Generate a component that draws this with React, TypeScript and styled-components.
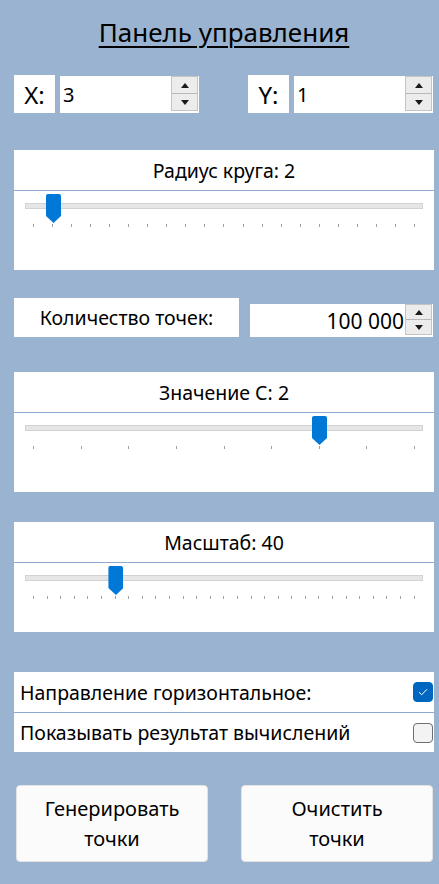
import { useState } from "react";
import styled, { createGlobalStyle } from "styled-components";

// ── Global ────────────────────────────────────────────────────────────────────

const GlobalStyle = createGlobalStyle`
  html, body {
    margin: 0;
    padding: 0;
    background: #9ab3d0;
  }
  body {
    font-family: "Noto Sans", "Open Sans", sans-serif;
    color: #000;
  }
`;

// ── Layout ────────────────────────────────────────────────────────────────────

const Page = styled.div`
  width: 420px;
  min-height: 884px;
  padding: 0 5px 0 14px;
  display: flex;
  flex-direction: column;
`;

const Title = styled.h1`
  margin: 14px 0 0;
  height: 36px;
  font-size: 26px;
  font-weight: 400;
  line-height: 36px;
  text-align: center;
  text-decoration: underline;
  text-underline-offset: 4px;
  text-decoration-thickness: 2px;
`;

const CoordRow = styled.div`
  margin-top: 25px;
  display: flex;
  justify-content: space-between;
  padding-right: 1px;
`;

const CoordGroup = styled.div`
  display: flex;
  gap: 5px;
  align-items: flex-end;
`;

const AxisLabel = styled.div`
  width: 41px;
  height: 38px;
  background: #fff;
  display: flex;
  align-items: center;
  justify-content: center;
  font-size: 24px;
`;

const CountRow = styled.div`
  margin-top: 28px;
  display: flex;
  align-items: flex-end;
  justify-content: space-between;
  padding-right: 1px;
`;

const CountLabel = styled.div`
  width: 225px;
  height: 39px;
  background: #fff;
  display: flex;
  align-items: center;
  justify-content: center;
  font-size: 19.5px;
`;

// ── Number input with spinner ─────────────────────────────────────────────────

const NumberBox = styled.div<{ $w: number; $h: number }>`
  width: ${({ $w }) => $w}px;
  height: ${({ $h }) => $h}px;
  background: #fff;
  display: flex;
  align-items: center;
  box-sizing: border-box;
  padding: 0 1px 0 3px;
`;

const NumberValue = styled.span<{ $align: "left" | "right"; $size: number }>`
  flex: 1;
  text-align: ${({ $align }) => $align};
  font-size: ${({ $size }) => $size}px;
  padding-right: 1px;
`;

const Spinner = styled.div`
  width: 27px;
  align-self: stretch;
  margin: 0 0 2px;
  display: flex;
  flex-direction: column;
  border: 1px solid #c4c4c4;
  background: #ececec;
  box-sizing: border-box;
`;

const SpinButton = styled.div<{ $down?: boolean }>`
  flex: 1;
  display: flex;
  align-items: center;
  justify-content: center;
  border-top: ${({ $down }) => ($down ? "1px solid #b8b8b8" : "none")};

  &::after {
    content: "";
    width: 0;
    height: 0;
    border-left: 4px solid transparent;
    border-right: 4px solid transparent;
    ${({ $down }) =>
      $down ? "border-top: 5px solid #1a1a1a;" : "border-bottom: 5px solid #1a1a1a;"}
  }
`;

function NumberField({
  value,
  width,
  height,
  align,
  size,
}: {
  value: string;
  width: number;
  height: number;
  align: "left" | "right";
  size: number;
}) {
  return (
    <NumberBox $w={width} $h={height}>
      <NumberValue $align={align} $size={size}>
        {value}
      </NumberValue>
      <Spinner>
        <SpinButton />
        <SpinButton $down />
      </Spinner>
    </NumberBox>
  );
}

// ── Slider card ───────────────────────────────────────────────────────────────

const Card = styled.div<{ $mt: number; $h: number }>`
  margin-top: ${({ $mt }) => $mt}px;
  height: ${({ $h }) => $h}px;
  background: #fff;
  display: flex;
  flex-direction: column;
`;

const CardHeader = styled.div`
  height: 40px;
  display: flex;
  align-items: center;
  justify-content: center;
  font-size: 19.5px;
  border-bottom: 1px solid #8eabcf;
`;

const SliderArea = styled.div`
  padding: 12px 11px 0;
`;

const Track = styled.div`
  position: relative;
  height: 6px;
  background: #e6e6e6;
  border: 1px solid #d2d2d2;
  box-sizing: border-box;
`;

const Thumb = styled.div`
  position: absolute;
  top: -10px;
  width: 15px;
  height: 29px;
  margin-left: -7px;
  background: #0078d7;
  border-radius: 2px 2px 0 0;
  clip-path: polygon(0 0, 100% 0, 100% 76%, 50% 100%, 0 76%);
`;

const Ticks = styled.div`
  margin: 15px 8px 0;
  height: 3px;
  display: flex;
  justify-content: space-between;
`;

const Tick = styled.span`
  width: 1px;
  height: 3px;
  background: #a0a0a0;
`;

function SliderCard({
  label,
  value,
  min,
  max,
  step,
  mt,
  h,
}: {
  label: string;
  value: number;
  min: number;
  max: number;
  step: number;
  mt: number;
  h: number;
}) {
  const frac = (value - min) / (max - min);
  const count = Math.round((max - min) / step) + 1;
  return (
    <Card $mt={mt} $h={h}>
      <CardHeader>
        {label}: {value}
      </CardHeader>
      <SliderArea>
        <Track>
          <Thumb style={{ left: `calc(8px + ${frac} * (100% - 16px))` }} />
        </Track>
        <Ticks>
          {Array.from({ length: count }, (_, i) => (
            <Tick key={i} />
          ))}
        </Ticks>
      </SliderArea>
    </Card>
  );
}

// ── Checkbox card ─────────────────────────────────────────────────────────────

const OptionsCard = styled.div`
  margin-top: 40px;
  background: #fff;
  display: flex;
  flex-direction: column;
`;

const OptionRow = styled.label`
  height: 40px;
  display: flex;
  align-items: center;
  justify-content: space-between;
  padding: 0 1px 0 6px;
  font-size: 19.5px;
  cursor: pointer;

  & + & {
    border-top: 1px solid #8eabcf;
    height: 39px;
  }
`;

const Box = styled.span<{ $checked: boolean }>`
  width: 20px;
  height: 20px;
  box-sizing: border-box;
  border-radius: 4px;
  display: flex;
  align-items: center;
  justify-content: center;
  background: ${({ $checked }) => ($checked ? "#0067c0" : "#f3f3f3")};
  border: 1px solid ${({ $checked }) => ($checked ? "#0067c0" : "#6e6e6e")};
`;

function Option({
  label,
  checked,
  onToggle,
}: {
  label: string;
  checked: boolean;
  onToggle: () => void;
}) {
  return (
    <OptionRow onClick={onToggle}>
      <span>{label}</span>
      <Box $checked={checked}>
        {checked && (
          <svg width="10" height="8" viewBox="0 0 10 8">
            <path d="M1 4.2 L3.7 6.8 L9 1.2" fill="none" stroke="#fff" strokeWidth="1" />
          </svg>
        )}
      </Box>
    </OptionRow>
  );
}

// ── Buttons ───────────────────────────────────────────────────────────────────

const ButtonRow = styled.div`
  margin-top: 33px;
  padding: 0 1px 0 2px;
  display: flex;
  justify-content: space-between;
`;

const ActionButton = styled.button`
  width: 192px;
  height: 77px;
  background: #fbfbfb;
  border: 1px solid #e3e3e3;
  border-radius: 4px;
  font-family: "Noto Sans", "Open Sans", sans-serif;
  font-size: 20px;
  line-height: 30px;
  color: #000;
  cursor: pointer;
  padding: 0;
`;

// ── App ───────────────────────────────────────────────────────────────────────

export default function App() {
  const [horizontal, setHorizontal] = useState(true);
  const [showResult, setShowResult] = useState(false);

  return (
    <>
      <GlobalStyle />
      <Page>
        <Title>Панель управления</Title>

        <CoordRow>
          <CoordGroup>
            <AxisLabel>X:</AxisLabel>
            <NumberField value="3" width={139} height={37} align="left" size={20} />
          </CoordGroup>
          <CoordGroup>
            <AxisLabel>Y:</AxisLabel>
            <NumberField value="1" width={139} height={37} align="left" size={20} />
          </CoordGroup>
        </CoordRow>

        <SliderCard label="Радиус круга" value={2} min={1} max={21} step={1} mt={37} h={120} />

        <CountRow>
          <CountLabel>Количество точек:</CountLabel>
          <NumberField value="100 000" width={183} height={33} align="right" size={21} />
        </CountRow>

        <SliderCard label="Значение С" value={2} min={-4} max={4} step={1} mt={35} h={120} />

        <SliderCard label="Масштаб" value={40} min={10} max={150} step={5} mt={30} h={110} />

        <OptionsCard>
          <Option
            label="Направление горизонтальное:"
            checked={horizontal}
            onToggle={() => setHorizontal((v) => !v)}
          />
          <Option
            label="Показывать результат вычислений"
            checked={showResult}
            onToggle={() => setShowResult((v) => !v)}
          />
        </OptionsCard>

        <ButtonRow>
          <ActionButton>
            Генерировать
            <br />
            точки
          </ActionButton>
          <ActionButton>
            Очистить
            <br />
            точки
          </ActionButton>
        </ButtonRow>
      </Page>
    </>
  );
}
